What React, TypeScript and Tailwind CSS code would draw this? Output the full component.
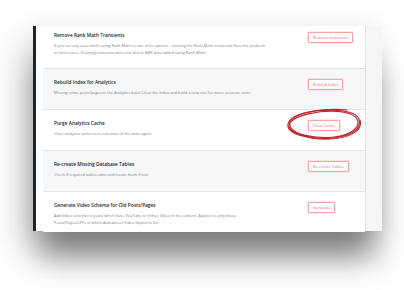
import React from "react";

const rows = [
  {
    title: "Remove Rank Math Transients",
    desc: [
      "If you see any issue while using Rank Math or one of its options - clearing the Rank Math transients fixes the problem",
      "in most cases. Deleting transients does not delete ANY data added using Rank Math.",
    ],
    button: "Remove transients",
  },
  {
    title: "Rebuild Index for Analytics",
    desc: ["Missing some posts/pages in the Analytics data? Clear the index and build a new one for more accurate stats."],
    button: "Rebuild Index",
  },
  {
    title: "Purge Analytics Cache",
    desc: ["Clear analytics cache to re-calculate all the stats again."],
    button: "Clear Cache",
  },
  {
    title: "Re-create Missing Database Tables",
    desc: ["Check if required tables exist and create them if not."],
    button: "Re-create Tables",
  },
  {
    title: "Generate Video Schema for Old Posts/Pages",
    desc: [
      "Add Video schema to posts which have YouTube or Vimeo Video in the content. Applies to only those",
      "Posts/Pages/CPTs in which Autodetect Video Option is On.",
    ],
    button: "Generate",
  },
];

function Scribble() {
  // hand drawn red loop round the Clear Cache button
  return (
    <svg
      className="absolute left-[285px] top-[108px] w-[78px] h-[34px]"
      viewBox="0 0 78 34"
      fill="none"
      stroke="#c2242b"
      strokeWidth="1.15"
      strokeLinecap="round"
    >
      <path d="M56 3 C36 0 6 5 3 16 C1 27 28 32 48 30 C68 28 77 20 74 11 C71 3 52 1 34 3" />
      <path d="M58 4 C38 1 7 7 4 17 C3 26 30 31 49 29 C67 27 76 19 72 11 C69 5 54 3 40 3" />
      <path d="M62 2 C44 0 9 3 5 14 C2 24 24 32 45 31 C66 30 78 22 75 12" />
    </svg>
  );
}

export default function App() {
  return (
    <div className="relative w-[404px] h-[290px] overflow-hidden bg-white font-['Open_Sans',sans-serif]">
      <div className="pt-[26px] pl-[33px]">
        <div className="flex w-[349px] h-[205px] bg-white shadow-[0_32px_30px_-6px_rgba(0,0,0,0.45),-14px_16px_32px_rgba(0,0,0,0.14),0_-6px_20px_rgba(0,0,0,0.04)]">
          {/* dark edge */}
          <div className="w-[3px] bg-[#1d2327] shrink-0" />
          <div className="flex-1 pl-[7px] bg-white">
            <div className="h-full border-r border-[#e2e4e7] flex flex-col">
              {rows.map((r, i) => (
                <div
                  key={r.title}
                  className={
                    (i === 0 ? "h-[42px] pt-[6px] " : "h-[41px] pt-[10px] border-t border-[#e2e4e7] ") +
                    (i % 2 === 1 ? "bg-[#f6f7f9] " : "bg-white ") +
                    "flex items-start pl-[11px] shrink-0"
                  }
                >
                  <div className="w-[254px] shrink-0">
                    <p className="text-[4.8px] leading-[6px] font-semibold text-[#23282d] whitespace-nowrap">{r.title}</p>
                    <div className="mt-[4px] text-[3.9px] leading-[7px] text-[#777c82]">
                      {r.desc.map((d) => (
                        <p key={d} className="whitespace-nowrap">{d}</p>
                      ))}
                    </div>
                  </div>
                  <button className="h-[11px] px-[4px] border border-[#f2a7a7] rounded-[1px] bg-white text-[4px] leading-none text-[#e06a6a] whitespace-nowrap shadow-[0_0_0_1px_rgba(242,167,167,0.25)]">
                    {r.button}
                  </button>
                </div>
              ))}
            </div>
          </div>
          {/* right strip */}
          <div className="w-[16px] shrink-0 bg-[#f4f5f7]" />
        </div>
      </div>
      <Scribble />
    </div>
  );
}
